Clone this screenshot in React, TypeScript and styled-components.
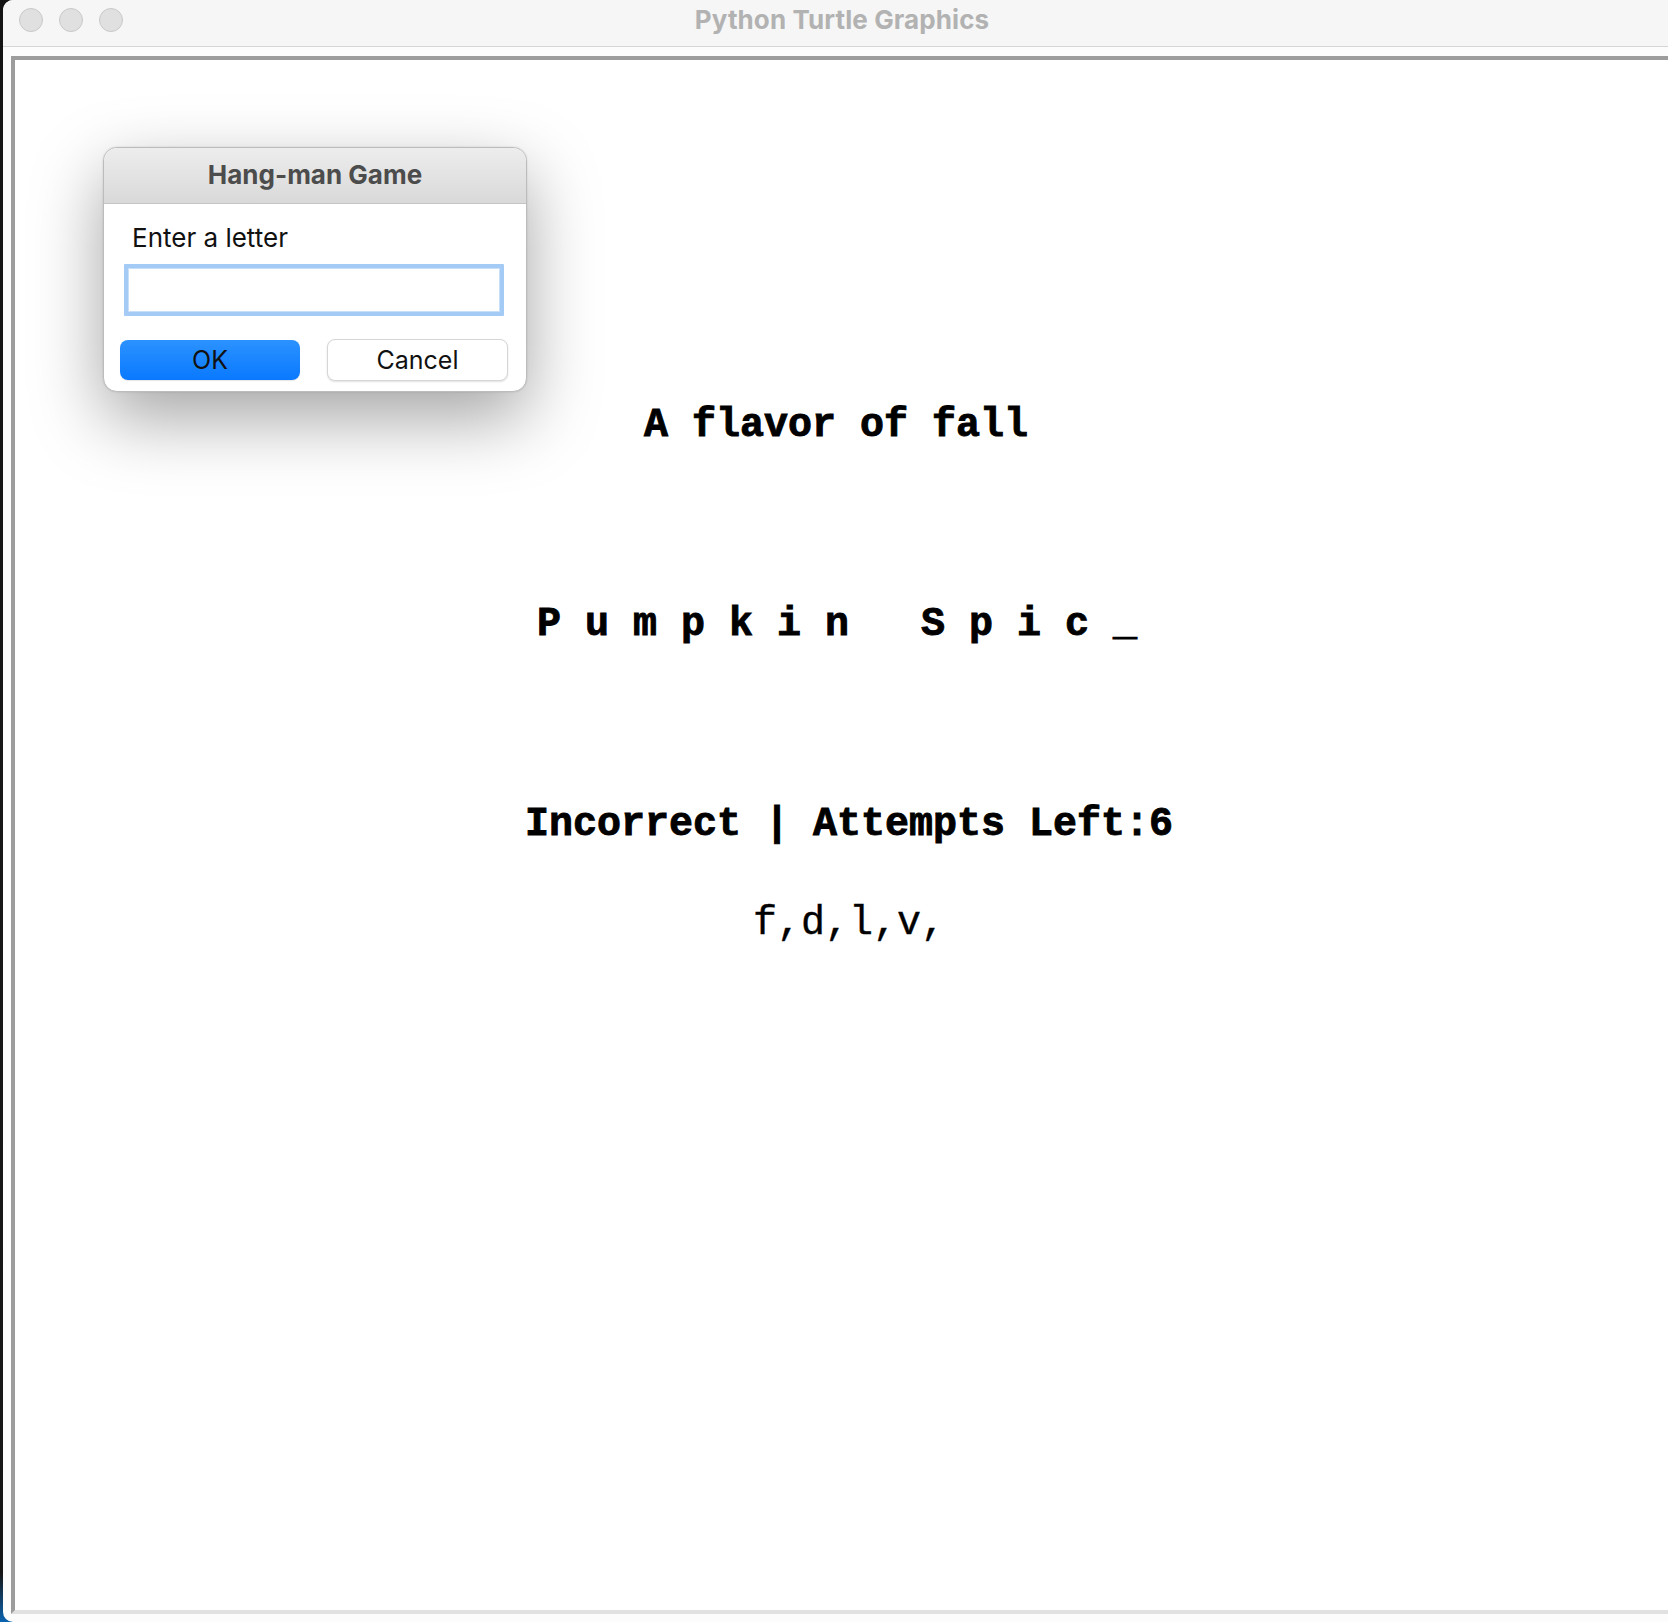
import React from "react";
import styled, { createGlobalStyle } from "styled-components";

const Global = createGlobalStyle`
  html, body {
    margin: 0;
    padding: 0;
    width: 1668px;
    height: 1622px;
    overflow: hidden;
    background: linear-gradient(to bottom, #141414 0%, #161616 97%, #0b63b0 100%);
  }
  * { box-sizing: border-box; }
`;

const Desktop = styled.div`
  display: flex;
  height: 1622px;
  padding-left: 3px;
`;

const Window = styled.div`
  flex: none;
  width: 1678px;
  height: 1622px;
  display: flex;
  flex-direction: column;
  background: #fcfcfc;
  border-radius: 10px 10px 0 10px;
  overflow: hidden;
`;

const TitleBar = styled.div`
  position: relative;
  flex: none;
  height: 47px;
  background: #f6f6f6;
  border-bottom: 1px solid #d5d5d5;
  display: flex;
  align-items: center;
  justify-content: center;
`;

const Lights = styled.div`
  position: absolute;
  left: 16px;
  top: 8px;
  display: flex;
  gap: 16px;
`;

const Light = styled.span`
  width: 24px;
  height: 24px;
  border-radius: 50%;
  background: #e0e0e0;
  border: 1px solid #c8c8c8;
`;

const Title = styled.div`
  font-family: Inter, "Noto Sans", sans-serif;
  font-weight: 700;
  font-size: 26px;
  color: #b2b2b2;
  margin-top: -8px;
  letter-spacing: 0.1px;
`;

const Body = styled.div`
  flex: 1;
  display: flex;
  padding: 9px 8px 8px 8px;
`;

const Canvas = styled.div`
  position: relative;
  flex: 1;
  background: #ffffff;
  border: 4px solid;
  border-color: #9c9c9c #e1e1e1 #e1e1e1 #9c9c9c;
  display: flex;
  flex-direction: column;
  align-items: stretch;
`;

const Line = styled.div<{ $top: number; $shift: number; $bold?: boolean }>`
  margin-top: ${(p) => p.$top}px;
  font-family: "Liberation Mono", "Courier New", monospace;
  font-weight: ${(p) => (p.$bold ? 700 : 400)};
  font-size: 40px;
  line-height: 40px;
  height: 40px;
  color: #000;
  text-align: center;
  white-space: pre;
  -webkit-text-stroke: ${(p) => (p.$bold ? "0.9px #000" : "0.4px #000")};
  padding-left: ${(p) => (p.$shift > 0 ? p.$shift * 2 : 0)}px;
  padding-right: ${(p) => (p.$shift < 0 ? -p.$shift * 2 : 0)}px;
`;

const Dialog = styled.div`
  position: absolute;
  left: 88px;
  top: 87px;
  width: 424px;
  height: 245px;
  border: 1px solid #bcbcbc;
  border-radius: 14px;
  background: #ffffff;
  overflow: hidden;
  box-shadow: 0 26px 70px rgba(0, 0, 0, 0.36), 0 0 2px rgba(0, 0, 0, 0.15);
  display: flex;
  flex-direction: column;
  font-family: Inter, "Noto Sans", sans-serif;
`;

const DialogHeader = styled.div`
  flex: none;
  height: 56px;
  background: linear-gradient(to bottom, #ededed, #d9d9d9);
  border-bottom: 1px solid #c4c4c4;
  display: flex;
  align-items: center;
  justify-content: center;
  font-weight: 700;
  font-size: 26px;
  color: #4c4c4c;
  padding-bottom: 2px;
`;

const DialogBody = styled.div`
  flex: 1;
  display: flex;
  flex-direction: column;
  padding: 19px 16px 0 20px;
`;

const Prompt = styled.div`
  font-size: 26px;
  line-height: 30px;
  color: #111;
  padding-left: 8px;
`;

const Field = styled.input`
  margin-top: 11px;
  width: 380px;
  height: 52px;
  border: 4px solid #a4cbf6;
  border-radius: 1px;
  background: #fff;
  outline: none;
  box-shadow: inset 0 0 0 1px #c9dff8;
  font-size: 22px;
`;

const Buttons = styled.div`
  margin-top: 23px;
  display: flex;
  gap: 27px;
  margin-left: -4px;
`;

const Button = styled.button<{ $primary?: boolean }>`
  width: ${(p) => (p.$primary ? 180 : 181)}px;
  height: ${(p) => (p.$primary ? 40 : 42)}px;
  margin-top: ${(p) => (p.$primary ? 1 : 0)}px;
  border-radius: 8px;
  font-family: Inter, "Noto Sans", sans-serif;
  font-size: 25px;
  color: #111;
  padding: 0;
  padding-bottom: 1px;
  border: ${(p) => (p.$primary ? "none" : "1px solid #d6d6d6")};
  background: ${(p) =>
    p.$primary ? "linear-gradient(to bottom, #2b92ff, #0a79ff)" : "#ffffff"};
  box-shadow: ${(p) =>
    p.$primary ? "0 1px 1px rgba(0,0,0,0.1)" : "0 1px 2px rgba(0,0,0,0.12)"};
`;

export default function App() {
  return (
    <>
      <Global />
      <Desktop>
        <Window>
          <TitleBar>
            <Lights>
              <Light />
              <Light />
              <Light />
            </Lights>
            <Title>Python Turtle Graphics</Title>
          </TitleBar>
          <Body>
            <Canvas>
              <Line $top={346} $shift={-6} $bold>
                A flavor of fall
              </Line>
              <Line $top={159} $shift={-5} $bold>
                {"P u m p k i n   S p i c _"}
              </Line>
              <Line $top={160} $shift={7} $bold>
                Incorrect | Attempts Left:6
              </Line>
              <Line $top={59} $shift={7}>
                f,d,l,v,
              </Line>
              <Dialog>
                <DialogHeader>Hang-man Game</DialogHeader>
                <DialogBody>
                  <Prompt>Enter a letter</Prompt>
                  <Field type="text" />
                  <Buttons>
                    <Button $primary>OK</Button>
                    <Button>Cancel</Button>
                  </Buttons>
                </DialogBody>
              </Dialog>
            </Canvas>
          </Body>
        </Window>
      </Desktop>
    </>
  );
}
